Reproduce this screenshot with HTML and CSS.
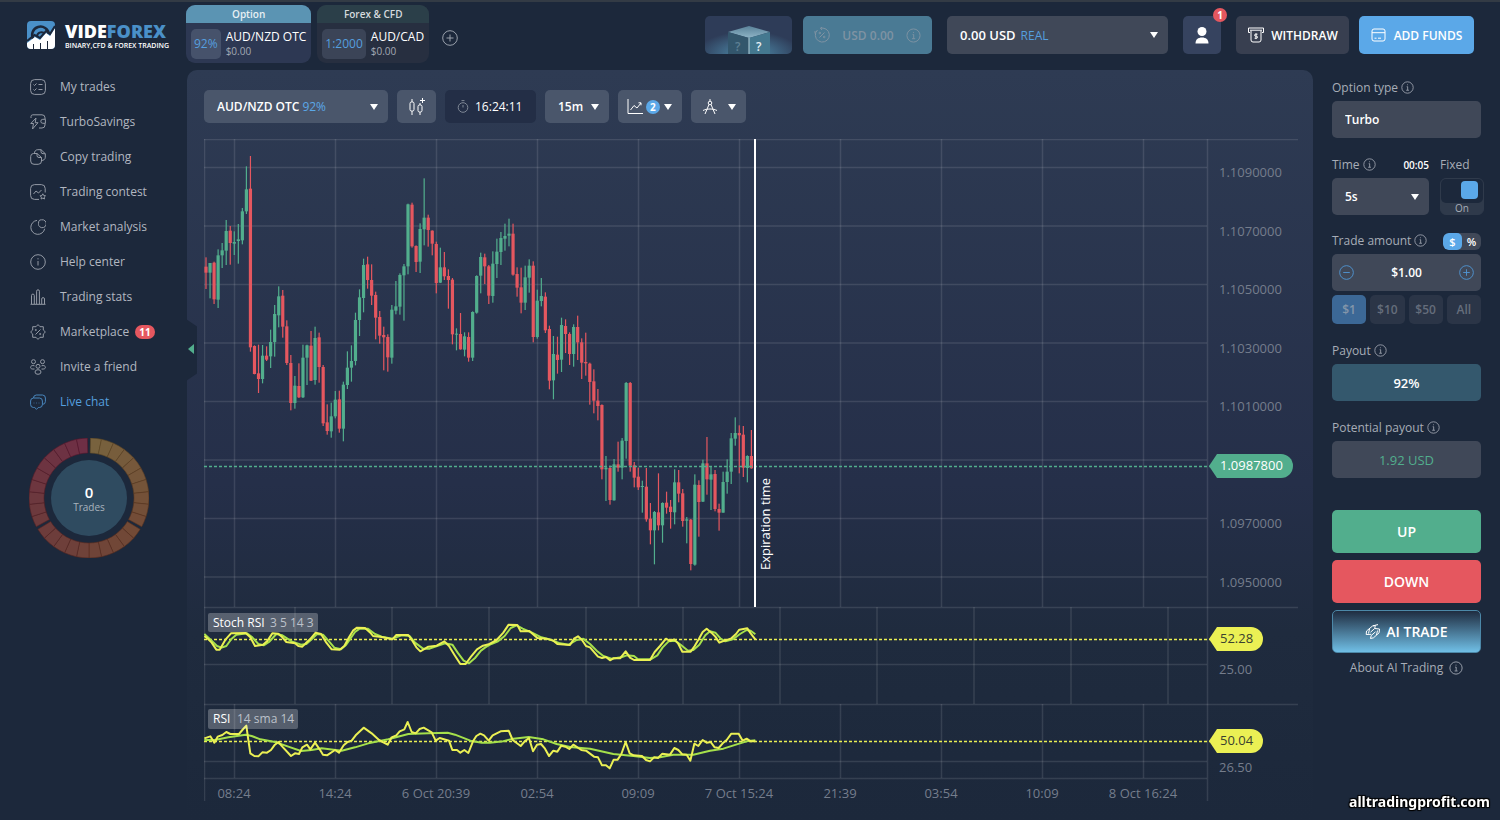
FILE: index.html
```html
<!DOCTYPE html>
<html lang="en">
<head>
  <meta charset="UTF-8" />
  <meta name="viewport" content="width=device-width, initial-scale=1.0"/>
  <title>VideForex</title>
  <link rel="stylesheet" href="styles.css">
</head>
<body>

<!-- shared icons -->
<svg class="sprite" aria-hidden="true">
  <symbol id="i-info" viewBox="0 0 16 16"><circle cx="8" cy="8" r="7"/><path d="M7 7h1.2v4.2M6.4 11.4h3.4M8 4.2v1"/></symbol>
  <symbol id="i-plus" viewBox="0 0 16 16"><circle cx="8" cy="8" r="7.3"/><path d="M8 4.5v7M4.5 8h7"/></symbol>
  <symbol id="i-minus" viewBox="0 0 16 16"><circle cx="8" cy="8" r="7.3"/><path d="M4.5 8h7"/></symbol>
</svg>

<header>
  <a href="#" class="logo">
    <svg width="28" height="28" viewBox="0 0 28 28">
      <rect width="28" height="28" rx="4" fill="#4a90c8"/>
      <path d="M6 18a8.500 8.500 0 1 1 16-5" fill="none" stroke="#1c283b" stroke-width="2.500"/>
      <path d="M10 15a4.500 4.500 0 0 1 8-2" fill="none" stroke="#1c283b" stroke-width="2"/>
      <path d="M0 22l8-6 5 3 6-7 4 3 5-8v17a4 4 0 0 1-4 4H4a4 4 0 0 1-4-4z" fill="#fff"/>
      <path d="M0 20l7.500-6 5.500 3 6-7 4 3 5-8" fill="none" stroke="#1c283b" stroke-width="2"/>
      <path d="M6.500 23v5M13.500 22v6M20.500 20v8" stroke="#1c283b" stroke-width="1"/>
    </svg>
    <span>
      <b class="brand">VIDE<i>FOREX</i></b>
      <span class="slogan">BINARY,CFD &amp; FOREX TRADING</span>
    </span>
  </a>

  <nav class="tabs">
    <a href="#" class="tab active">
      <span class="tab-title">Option</span>
      <span class="tab-body"><span class="rate">92%</span><span class="pair">AUD/NZD OTC<small>$0.00</small></span></span>
    </a>
    <a href="#" class="tab">
      <span class="tab-title">Forex &amp; CFD</span>
      <span class="tab-body"><span class="rate">1:2000</span><span class="pair">AUD/CAD<small>$0.00</small></span></span>
    </a>
    <button class="add-tab" aria-label="Add tab"><svg class="icon" width="16" height="16"><use href="#i-plus"/></svg></button>
  </nav>

  <div class="account">
    <button class="gift" aria-label="Mystery box">
      <svg width="87" height="38" viewBox="0 0 87 38">
        <defs>
          <radialGradient id="glow" cx=".5" cy="1" r=".6"><stop offset="0" stop-color="#4f8fab"/><stop offset=".5" stop-color="#3f6684"/><stop offset="1" stop-color="#2e3c58"/></radialGradient>
          <linearGradient id="lid" x1="0" y1="0" x2="0" y2="1"><stop offset="0" stop-color="#5a8299"/><stop offset="1" stop-color="#8fb4c6"/></linearGradient>
        </defs>
        <rect width="87" height="38" fill="url(#glow)"/>
        <path d="M23 16l21-6 21 6-21 6z" fill="url(#lid)"/>
        <path d="M23 16l21 6v16H23z" fill="#33566c"/>
        <path d="M65 16l-21 6v16h21z" fill="#44788f"/>
        <path d="M44 22v16" stroke="#b5d0dc"/>
        <text x="30" y="35" font-size="12" fill="#5d7f93">?</text>
        <text x="51" y="35" font-size="12" font-weight="600" fill="#e4eef3">?</text>
      </svg>
    </button>
    <button class="bonus">
      <svg class="icon" width="16" height="16" viewBox="0 0 16 16"><path d="M3.500 3A7 7 0 1 0 9 1.100H6.500M8 0L6.500 1.200 8 3M1 6.500V4M10.500 5.500l-5 5"/><circle cx="5.800" cy="6" r=".8"/><circle cx="10.200" cy="10" r=".8"/></svg>
      <span>USD 0.00</span>
      <svg class="icon" width="15" height="15"><use href="#i-info"/></svg>
    </button>
    <label class="balance caret">
      <span>0.00 USD</span>
      <select aria-label="Account"><option>REAL</option><option>DEMO</option></select>
    </label>
    <button class="profile" aria-label="Profile">
      <svg width="14" height="17" viewBox="0 0 14 17" fill="#fff"><circle cx="7" cy="4.500" r="4.500"/><path d="M.5 16.500c0-4 2.500-6 6.500-6s6.500 2 6.500 6z"/></svg>
      <span class="count">1</span>
    </button>
    <div class="funds">
      <button class="withdraw">
        <svg class="icon" width="18" height="16" viewBox="0 0 18 16"><path d="M3 5.500H1.500V1h15v4.500H15M3 3.200h12M4 3.500V13a2 2 0 0 0 2 2h6a2 2 0 0 0 2-2V3.500M10.500 7.200H8.600a1 1 0 0 0 0 2h.9a1 1 0 0 1 0 2H7.600M9 6.300v5.800"/></svg>
        WITHDRAW
      </button>
      <button class="add-funds">
        <svg class="icon" width="15" height="14" viewBox="0 0 15 14"><rect x="1" y="1" width="13" height="12" rx="2"/><path d="M1 4.700h13M3.500 10.200h2M7 10.200h3"/></svg>
        ADD FUNDS
      </button>
    </div>
  </div>
</header>

<div class="layout">
  <aside class="sidebar">
    <nav class="menu">
      <a href="#"><svg class="icon" viewBox="0 0 16 16"><rect x=".6" y=".6" width="14.800" height="14.800" rx="4"/><path d="M3.500 5.500l1 1 2-2M8.500 5.500h4M3.500 10.500l1 1 2-2M8.500 10.500h4"/></svg>My trades</a>
      <a href="#"><svg class="icon" viewBox="0 0 16 16"><path d="M1 4V2.500A1.800 1.800 0 0 1 2.800.8H12a3 3 0 0 1 3 3V5M15 9.500V11a3 3 0 0 1-3 3H9M15.400 5.300h-2.600a2 2 0 0 0 0 4h2.600zM6 4L.8 9.500h2.700L2.500 15 8 8.700H5.200z"/></svg>TurboSavings</a>
      <a href="#"><svg class="icon" viewBox="0 0 16 16"><path d="M3.500 4.500H7l4.500 4V12a3.300 3.300 0 0 1-3.300 3.300H4A3.300 3.300 0 0 1 .7 12V7.500a3 3 0 0 1 2.800-3zM7 4.500v2a2 2 0 0 0 2 2h2.500M4.500 4.500A3.300 3.300 0 0 1 7.800.7H11l4.300 4v3.500a3.300 3.300 0 0 1-3.800 3.200M11 .7v2a2 2 0 0 0 2 2h2.300"/></svg>Copy trading</a>
      <a href="#"><svg class="icon" viewBox="0 0 16 16"><path d="M9 15.400H4.500A3.900 3.900 0 0 1 .6 11.500v-7A3.900 3.900 0 0 1 4.500.6h6.800a3.900 3.900 0 0 1 3.900 3.900V8.500M3.500 10l2.500-3 2.500 2 3-3M12.800 9.800l.9 1.700 1.800.3-1.300 1.300.3 1.900-1.700-.8-1.700.8.3-1.900-1.300-1.300 1.800-.3z"/></svg>Trading contest</a>
      <a href="#"><svg class="icon" viewBox="0 0 16 16"><path d="M7 1.400a7 7 0 1 0 7.700 8.300M11.500.8a4 4 0 1 1-2 6.800c-1-1-1-1.500-1-3C8.500 2 9 .8 11.500.8z"/></svg>Market analysis</a>
      <a href="#"><svg class="icon" viewBox="0 0 16 16"><circle cx="8" cy="8" r="7.300"/><path d="M8 7v4.500M8 4.200v1.200"/></svg>Help center</a>
      <a href="#"><svg class="icon" viewBox="0 0 16 16"><path d="M.5 15.300h15M1.500 15V6.500a1.400 1.400 0 0 1 2.800 0V15M6.600 15V2.200a1.400 1.400 0 0 1 2.800 0V15M11.700 15v-5a1.400 1.400 0 0 1 2.800 0v5"/></svg>Trading stats</a>
      <a href="#"><svg class="icon" viewBox="0 0 16 16"><path d="M8 .6l2 2.100h3.300V6l2.100 2-2.100 2v3.300H10l-2 2.100-2-2.100H2.700V10L.6 8l2.100-2V2.700H6zM10.500 5.500l-5 5"/><circle cx="5.800" cy="6" r=".6"/><circle cx="10.200" cy="10" r=".6"/></svg>Marketplace<span class="count">11</span></a>
      <a href="#"><svg class="icon" viewBox="0 0 16 16"><circle cx="3.500" cy="2.700" r="2"/><circle cx="12.500" cy="2.700" r="2"/><circle cx="8" cy="7.300" r="2"/><ellipse cx="8" cy="13" rx="3" ry="2.300"/><path d="M4.500 6.800C2 6 .6 7 .6 8.400S2 10.300 4.500 10M11.500 6.800c2.500-.8 3.900.2 3.900 1.600s-1.400 1.900-3.900 1.600"/></svg>Invite a friend</a>
      <a href="#" class="live"><svg class="icon" viewBox="0 0 16 16"><path d="M3.500 4h6A3 3 0 0 1 12.400 7v3.500a3 3 0 0 1-2.900 3H8.300L6.500 15.300 4.700 13.500H3.500a3 3 0 0 1-2.900-3V7a3 3 0 0 1 2.900-3zM3.500 4A3 3 0 0 1 6.200 1h6.300a3 3 0 0 1 2.900 3v3.500a3 3 0 0 1-3 2.900M3.700 9h.6M6.200 9h.6M8.700 9h.6"/></svg>Live chat</a>
    </nav>
    <div class="trades">
      <svg id="ring" viewBox="0 0 120 120"></svg>
      <div class="trades-count"><b>0</b>Trades</div>
    </div>
  </aside>

  <main>
    <button class="collapse" aria-label="Hide menu"></button>
    <div class="toolbar">
      <button class="asset caret">AUD/NZD OTC <span>92%</span></button>
      <button class="tool square" aria-label="Chart type">
        <svg class="icon" width="18" height="18" viewBox="0 0 18 18"><rect x="2" y="4" width="4" height="9" rx="1.500"/><rect x="10" y="7" width="4" height="7" rx="1.500"/><path d="M4 1v3M4 13v4M12 5v2M12 14v3M14.500 0v5M12 2.500h5"/></svg>
      </button>
      <div class="clock">
        <svg class="icon" width="12" height="13" viewBox="0 0 12 13"><circle cx="6" cy="7.500" r="4.800"/><path d="M6 5v2.500M4.500.6h3"/></svg>
        16:24:11
      </div>
      <label class="tool interval caret"><select aria-label="Interval"><option>15m</option><option>1h</option></select></label>
      <button class="tool caret" aria-label="Indicators">
        <svg class="icon" width="16" height="16" viewBox="0 0 16 16"><path d="M1 0v14.500h15M3.500 11l3.500-4.500 3 2.500 4-5M11.500 3.800H14v2.500"/></svg>
        <span class="count blue">2</span>
      </button>
      <button class="tool drawing caret" aria-label="Drawing tools">
        <svg class="icon" width="16" height="16" viewBox="0 0 16 16"><circle cx="8" cy="4" r="1.800"/><path d="M8 0v2M7 5.500L3 15M9 5.500L13 15M1 11.500c4-2 10-2 14 0"/></svg>
      </button>
    </div>
    <svg id="chart" viewBox="0 0 1094 664" role="img" aria-label="AUD/NZD OTC price chart"></svg>
  </main>

  <form class="order">
    <label for="type" class="caption">Option type <svg class="icon" width="13" height="13"><use href="#i-info"/></svg></label>
    <select id="type" class="box"><option>Turbo</option></select>

    <div class="time-row">
      <div class="time">
        <label for="time" class="caption">Time <svg class="icon" width="13" height="13"><use href="#i-info"/></svg><b>00:05</b></label>
        <div class="caret"><select id="time" class="box"><option>5s</option><option>10s</option></select></div>
      </div>
      <div class="fixed">
        <label for="fixed" class="caption">Fixed</label>
        <div class="switch"><input type="checkbox" id="fixed" checked><span>On</span></div>
      </div>
    </div>

    <div class="amount-row">
      <label for="amount" class="caption">Trade amount <svg class="icon" width="13" height="13"><use href="#i-info"/></svg></label>
      <div class="unit">
        <label><input type="radio" name="unit" checked><span>$</span></label>
        <label><input type="radio" name="unit"><span>%</span></label>
      </div>
    </div>
    <div class="box stepper">
      <button type="button" aria-label="Less"><svg class="icon" width="15" height="15"><use href="#i-minus"/></svg></button>
      <input type="text" id="amount" value="$1.00">
      <button type="button" aria-label="More"><svg class="icon" width="15" height="15"><use href="#i-plus"/></svg></button>
    </div>
    <div class="quick">
      <button type="button" class="active">$1</button>
      <button type="button">$10</button>
      <button type="button">$50</button>
      <button type="button">All</button>
    </div>

    <div class="caption">Payout <svg class="icon" width="13" height="13"><use href="#i-info"/></svg></div>
    <output class="box payout">92%</output>

    <div class="caption">Potential payout <svg class="icon" width="13" height="13"><use href="#i-info"/></svg></div>
    <output class="box potential">1.92 USD</output>

    <div class="actions">
      <button type="button" class="up">UP</button>
      <button type="button" class="down">DOWN</button>
      <button type="button" class="ai">
        <svg class="icon" width="16" height="16" viewBox="0 0 16 16"><path d="M1.200 10.500L1.500 7l6-5 2.800-.5-.6 3L5.500 8.200M9.800 4.500L14.500 5l-.4 3.800-5.600 5-3 .7.700-3 4.300-3.700M4.500 5l-1 4.500M11.500 11l1-4.500M1.200 10.500l5-.2M8 1.800l5-1.200"/></svg>
        AI TRADE
      </button>
    </div>
    <a href="#" class="about">About AI Trading <svg class="icon" width="14" height="14"><use href="#i-info"/></svg></a>
  </form>
</div>

<div class="site">alltradingprofit.com</div>

<script src="chart.js"></script>
</body>
</html>
```
FILE: styles.css
```css
* {
  box-sizing: border-box;
}

body {
  margin: 0;
  min-height: 100vh;
  background: #1c283b;
  color: #fff;
  font-family: "Open Sans", "Noto Sans", sans-serif;
  font-size: 12px;
  border-top: 2px solid #333b45;
}

button, select, input {
  font: inherit;
  color: inherit;
  border: none;
  border-radius: 5px;
  background: none;
  padding: 0;
  margin: 0;
}

select {
  appearance: none;
  width: 100%;
}

a {
  color: inherit;
  text-decoration: none;
}

.sprite {
  position: absolute;
  width: 0;
  height: 0;
}

.icon {
  fill: none;
  stroke: currentColor;
  stroke-width: 1;
  flex: none;
}

.caret {
  position: relative;
}

.caret::after {
  content: "";
  position: absolute;
  right: 10px;
  top: 50%;
  margin-top: -3px;
  border: 4px solid transparent;
  border-top: 6px solid #fff;
  border-bottom: none;
  pointer-events: none;
}

.count {
  background: #e5575f;
  color: #fff;
  font-size: 10px;
  font-weight: 700;
  line-height: 14px;
  padding: 0 4px;
  border-radius: 7px;
}

.count.blue {
  background: #5ba8e8;
}

/* header */

header {
  display: flex;
  align-items: flex-start;
  height: 68px;
  padding-right: 26px;
}

.logo {
  display: flex;
  align-items: flex-start;
  gap: 10px;
  width: 186px;
  padding: 19px 0 0 27px;
  white-space: nowrap;
}

.logo > span {
  display: flex;
  flex-direction: column;
}

.brand {
  font-size: 18px;
  line-height: 20px;
  font-weight: 800;
}

.brand i {
  font-style: normal;
  color: #4a90c8;
}

.slogan {
  font-size: 7px;
  line-height: 9px;
  font-weight: 600;
}

.tabs {
  display: flex;
  gap: 6px;
  padding-top: 3px;
}

.tab {
  background: #272f40;
  border-radius: 9px;
  overflow: hidden;
  height: 58px;
}

.tab.active {
  background: #2d3853;
}

.tab-title {
  display: block;
  background: #2b3f49;
  color: #d5dade;
  font-size: 10px;
  font-weight: 600;
  line-height: 18px;
  text-align: center;
}

.active .tab-title {
  background: #5b94b3;
  color: #e8f0f4;
}

.tab-body {
  display: flex;
  gap: 5px;
  padding: 6px 5px;
}

.rate {
  background: #3b4457;
  color: #559fdf;
  font-weight: 500;
  line-height: 29px;
  padding: 0 3px;
  border-radius: 5px;
}

.active .rate {
  background: #46526b;
}

.pair {
  font-weight: 500;
  line-height: 15px;
}

.pair small {
  display: block;
  color: #a3a9b4;
  font-size: 10px;
  font-weight: 400;
}

.add-tab {
  align-self: center;
  height: 16px;
  margin: 8px 0 0 7px;
  color: #9aa1ac;
}

.account {
  display: flex;
  gap: 15px;
  margin-left: auto;
  padding-top: 14px;
}

.account button,
.balance {
  height: 38px;
  display: flex;
  align-items: center;
  justify-content: center;
  font-weight: 600;
}

.account .gift {
  width: 87px;
  overflow: hidden;
  margin-right: -4px;
}

.account .bonus {
  width: 129px;
  gap: 12px;
  background: #4a7a94;
  color: #7f93a3;
}

.balance {
  width: 221px;
  padding-left: 13px;
  gap: 5px;
  background: #404858;
  border-radius: 5px;
  white-space: nowrap;
  font-size: 13px;
}

.balance select {
  color: #559fdf;
  font-weight: 500;
  font-size: 12px;
}

.account .profile {
  position: relative;
  width: 38px;
  background: #36435f;
}

.profile .count {
  position: absolute;
  top: -8px;
  right: -6px;
}

.funds {
  display: flex;
  gap: 10px;
}

.account .withdraw {
  width: 113px;
  gap: 6px;
  background: #383f50;
}

.account .add-funds {
  width: 115px;
  gap: 8px;
  background: #5ba8e8;
}

/* columns */

.layout {
  display: grid;
  grid-template-columns: 187px 1fr 187px;
}

.menu {
  display: flex;
  flex-direction: column;
  margin-top: -1px;
  color: #b2b7c0;
  font-weight: 500;
}

.menu a {
  display: flex;
  align-items: center;
  height: 35px;
  padding-left: 30px;
}

.menu .icon {
  width: 16px;
  height: 16px;
  margin-right: 14px;
  opacity: 0.8;
}

.menu .count {
  margin-left: 6px;
}

.menu .live {
  color: #559fdf;
}

.trades {
  display: grid;
  width: 120px;
  margin: 19px 0 0 29px;
}

.trades > * {
  grid-area: 1 / 1;
}

.trades-count {
  place-self: center;
  color: #a9b3bd;
  font-size: 10px;
  line-height: 12px;
  text-align: center;
}

.trades-count b {
  display: block;
  color: #fff;
  font-size: 15px;
  font-weight: 600;
  line-height: 18px;
}

main {
  position: relative;
  min-width: 0;
  padding: 20px 15px 17px 17px;
  border-radius: 10px 10px 0 0;
  background: linear-gradient(#2e3b53, #252f49 55%, #1f2b3e 75%, #1c283b);
}

.collapse {
  position: absolute;
  left: -1px;
  top: 249px;
  width: 11px;
  height: 62px;
  border-radius: 0;
  background: #1c283b;
  clip-path: polygon(0 0, 100% 12%, 100% 88%, 0 100%);
}

.collapse::after {
  content: "";
  position: absolute;
  left: 2px;
  top: 25px;
  border: 5px solid transparent;
  border-right: 6px solid #52ae8d;
  border-left: none;
}

.toolbar {
  display: flex;
  gap: 9px;
  margin-bottom: 16px;
}

.toolbar > * {
  display: flex;
  align-items: center;
  height: 33px;
  padding-left: 9px;
  border-radius: 5px;
  background: #4a566b;
}

.toolbar .asset {
  width: 184px;
  gap: 3px;
  padding-left: 13px;
  font-weight: 600;
}

.asset span {
  color: #5ba8e8;
  font-weight: 400;
}

.tool {
  width: 64px;
}

.toolbar .square {
  width: 39px;
  padding-left: 11px;
}

.toolbar .clock {
  width: 91px;
  gap: 6px;
  padding-left: 12px;
  background: #232e46;
}

.clock .icon {
  color: #7f8896;
}

.interval select {
  padding-left: 4px;
  font-weight: 600;
}

.tool .count {
  margin-left: 3px;
}

.toolbar .drawing {
  width: 55px;
  padding-left: 11px;
}

#chart {
  display: block;
  width: 100%;
  height: auto;
}

#chart text {
  font-size: 13px;
  fill: #757d8c;
}

#chart .grid {
  stroke: #fff;
  stroke-opacity: 0.11;
  stroke-width: 1.5;
}

#chart .dash {
  fill: none;
  stroke-width: 1.3;
  stroke-dasharray: 3 2;
}

#chart .curve {
  fill: none;
  stroke-width: 2;
  stroke-linejoin: round;
}

#chart .white {
  fill: #fff;
}

#chart .dark {
  fill: #3a4130;
}

#chart .legend {
  font-size: 12px;
  fill: #bcc1ca;
}

#chart .legend tspan {
  fill: #fff;
}

/* order form */

.order {
  display: flex;
  flex-direction: column;
  padding: 6px 19px 0;
}

.caption {
  display: flex;
  align-items: center;
  gap: 3px;
  height: 23px;
  margin-bottom: 2px;
  color: #a7adb7;
}

.caption b {
  margin-left: auto;
  color: #fff;
  font-size: 10px;
  font-weight: 600;
}

.box {
  display: flex;
  align-items: center;
  justify-content: center;
  height: 37px;
  padding: 0 13px;
  margin-bottom: 15px;
  border-radius: 5px;
  background: #404858;
  font-weight: 600;
}

.time-row {
  display: flex;
  gap: 11px;
  height: 76px;
  margin-right: -3px;
}

.time {
  flex: 1;
}

.time .box {
  margin: 0;
}

.switch {
  display: flex;
  flex-direction: column;
  width: 44px;
  border: 1px solid #2f3a4b;
  border-radius: 6px;
  background: #2f3a4b;
  color: #a7adb7;
  font-size: 10px;
  line-height: 11px;
  text-align: center;
}

.switch input {
  appearance: none;
  height: 24px;
  background: #1c283b;
}

.switch input::before {
  content: "";
  display: block;
  width: 17px;
  height: 18px;
  margin: 2px 0 0 20px;
  border-radius: 4px;
  background: #5ba8e8;
}

.amount-row {
  display: flex;
  justify-content: space-between;
  align-items: center;
}

.unit {
  display: flex;
  border-radius: 6px;
  overflow: hidden;
  background: #404858;
  font-weight: 600;
  font-size: 11px;
  line-height: 17px;
  text-align: center;
}

.unit input {
  position: absolute;
  opacity: 0;
}

.unit span {
  display: block;
  width: 19px;
}

.unit input:checked + span {
  background: #5ba8e8;
  border-radius: 5px;
}

.stepper {
  margin-bottom: 4px;
  padding: 0 7px;
}

.stepper button {
  height: 15px;
  color: #4f93d0;
}

.stepper input {
  flex: 1;
  min-width: 0;
  text-align: center;
}

.quick {
  display: grid;
  grid-template-columns: repeat(4, 1fr);
  gap: 4px;
  margin-bottom: 15px;
}

.quick button {
  height: 29px;
  background: #2b3547;
  color: #656d7b;
  font-weight: 600;
}

.quick .active {
  background: #3c6896;
  color: #8496aa;
}

.payout {
  background: #34586d;
  font-size: 13px;
}

.potential {
  color: #52ae8d;
  font-size: 13px;
  font-weight: 500;
  margin-bottom: 32px;
}

.actions {
  display: grid;
  gap: 7px;
}

.actions button {
  height: 43px;
  font-size: 14px;
  font-weight: 600;
}

.actions .up {
  background: #52ae8d;
}

.actions .down {
  background: #e5575f;
}

.actions .ai {
  display: flex;
  align-items: center;
  justify-content: center;
  gap: 5px;
  border: 1px solid #4c88a8;
  background: linear-gradient(#1f2c40, #70bfe6);
}

.about {
  display: flex;
  align-items: center;
  justify-content: center;
  gap: 6px;
  margin-top: 6px;
  color: #a7adb7;
}

.site {
  position: fixed;
  right: 10px;
  bottom: 9px;
  font-family: "Noto Sans", sans-serif;
  font-size: 14px;
  font-weight: 700;
  line-height: 18px;
  text-shadow: 1px 1px 1px #000, -1px -1px 1px #000, 1px -1px 1px #000, -1px 1px 1px #000;
}
```
FILE: chart.js
```js
const GREEN = '#52ae8d';
const RED = '#e5575f';
const YELLOW = '#ebf054';
const LIME = '#a5e04b';

// one bar: direction, high, body top, body bottom, low (thirds of a pixel)
const morning = `R 367 395 413 462,G 384 384 413 490,R 380 383 493 507,G 343 361 494 519,G 324 346 361 399,
G 255 288 347 390,R 273 287 324 389,G 289 321 326 360,G 267 313 318 386,G 219 229 316 328,G 94 163 229 237,
R 63 161 637 650,R 631 633 717 718,R 629 715 732 774,G 630 662 732 745,R 634 662 674 678,G 584 621 664 699,
G 510 537 621 665,G 454 484 541 577,R 465 482 575 608,R 556 574 684 690,R 660 684 804 826,G 723 752 804 821,
R 685 753 787 789,G 629 668 787 789,G 629 631 668 750,R 588 632 737 738,G 575 609 735 749,R 593 607 696 743,
R 690 696 865 873,R 808 862 888 899,G 803 844 889 908,G 768 794 844 850,R 767 793 881 893,G 740 749 881 919,
G 649 698 750 762,G 631 678 698 740,G 533 555 678 691,G 463 487 555 603,G 371 390 489 532,R 365 388 435 461,
R 388 435 482 510,R 470 480 548 613,R 528 546 602 626,R 575 600 607 706,R 598 606 667 710,G 510 524 668 686,
G 438 514 527 538,G 415 420 515 539,G 387 394 421 557,G 206 208 394 418,R 203 209 334 338,R 331 333 381 411,
G 265 282 380 414,G 130 248 283 331,R 239 248 285 335,R 286 287 326 361,R 320 327 444 475,G 338 397 443 444,
R 351 397 424 435,R 403 423 435 521,R 429 434 598 628,G 580 596 599 646,R 534 597 643 644,G 592 604 644 664,
R 592 606 668 680,G 529 531 668 678,G 421 423 533 536,G 353 366 422 475,R 356 367 394 447,R 390 394 482 507`;

const evening = `G 154 191 288 308,G 116 155 192 234,G 96 114 156 195,G 71 108 116 152,G 56 101 107 139,
R 71 101 224 227,R 202 222 263 290,R 203 262 308 340,G 197 232 308 330,G 178 197 233 278,R 184 197 411 427,
G 269 302 411 416,G 234 288 303 319,R 277 290 391 399,R 377 387 542 568,G 408 462 541 598,R 410 464 480 521,
G 353 375 479 516,R 358 378 402 459,R 397 402 462 495,G 373 381 462 500,R 347 381 427 480,R 415 427 488 537,
R 398 486 490 527,R 488 491 546 614,R 508 544 602 640,R 567 602 618 661,R 613 615 808 838,G 768 803 808 903,
R 797 804 900 914,G 777 793 901 902,R 725 793 803 815,G 714 722 803 838,G 546 549 723 776,R 546 549 797 815,
R 786 796 833 862,R 803 830 862 870,G 842 858 861 938,R 804 860 958 965,R 909 956 991 1033,G 933 936 991 1093,
R 820 937 976 991,G 907 909 976 1028,R 875 908 923 941,R 900 920 936 986,G 808 847 937 973,R 810 847 881 907,
R 867 880 963 980,G 951 958 962 1030,R 957 959 1092 1111,G 823 854 1094 1097,R 841 855 906 1010,G 779 790 905 906,
R 711 790 838 884,G 798 823 839 930,R 810 822 927 934,R 911 927 938 992,G 815 846 938 938,G 778 815 846 881,
G 699 715 815 852,G 652 699 716 737,R 676 699 706 820,R 678 704 803 831,G 766 768 804 847,R 690 768 805 806`;

const stochK = [
  '28,108 40,118 50,128 64,149 74,149 92,118 108,100 152,99 166,112 180,138 204,134 216,124 232,100 250,101 262,112 274,126 300,130 310,138 322,140 332,130 345,118 362,98 378,102 394,128 410,148 434,149 448,138 462,112 474,92 486,83 510,84 526,98 534,108 560,111 592,118 604,105 640,105 652,122 664,142 676,154 700,140 725,137 748,124 762,138 778,164 796,192 812,192 828,170 846,148 864,137',
  '26,133 50,120 70,98 86,74 112,75 122,94 148,93 172,114 200,116 220,122 232,132 270,135 282,116 294,109 306,120 318,138 330,142 354,170 366,174 378,171 390,181 400,175 420,175 437,154 450,173 462,180 510,180 524,156 540,138 558,116 570,123 582,118 594,130 607,155 632,155 644,138 656,118 668,96 680,86 694,98 706,110 718,128 734,122 754,115 768,102 778,89 802,85 812,100 826,118'
];
const stochD = [
  '28,102 50,122 66,138 80,143 94,138 110,116 124,104 156,100 172,112 190,132 206,136 222,126 244,102 262,106 290,124 318,134 334,132 350,118 366,102 384,104 400,122 418,143 438,148 452,136 466,116 480,96 494,86 518,86 540,102 560,110 592,116 620,106 644,108 660,128 684,146 704,146 726,138 750,130 772,134 788,158 806,182 822,190 840,174 858,152',
  '16,142 34,132 54,124 74,108 92,84 110,76 128,86 156,98 184,112 214,120 240,130 266,134 290,120 310,116 330,132 350,152 370,168 394,176 424,172 440,166 462,168 474,178 512,178 532,166 548,142 566,124 586,122 604,136 624,152 640,150 658,134 676,106 690,94 706,98 722,116 736,124 758,118 780,102 800,90 812,92 826,103'
];
const rsi = [
  '28,415 46,409 58,428 68,410 82,405 94,396 106,402 132,402 142,390 154,377 160,420 166,460 178,468 190,469 202,457 216,458 228,450 238,436 250,426 262,440 288,468 300,460 312,462 322,442 336,434 346,448 360,428 374,448 384,464 396,466 420,450 432,458 446,436 458,426 470,422 482,406 506,383 530,400 552,420 578,434 590,412 604,406 614,394 628,388 638,366 650,396 662,400 674,387 686,383 710,397 722,422 734,414 762,422 772,450 786,450 796,458 808,450 820,459 834,424 844,408 856,401',
  '12,406 26,422 38,406 62,394 86,392 98,420 122,438 134,424 147,414 159,454 171,434 183,432 195,446 207,468 220,452 232,455 244,437 256,440 268,447 280,434 304,450 318,452 342,470 354,472 366,496 378,496 389,505 401,479 413,479 424,462 437,426 449,460 461,466 486,468 498,480 510,484 522,472 534,474 547,461 570,464 583,444 595,450 607,463 620,464 631,482 643,431 655,438 668,420 680,428 692,426 704,442 716,444 728,430 740,420 754,401 776,401 788,422 800,416 812,424 826,424'
];
const sma = [
  '28,420 60,420 100,412 152,404 170,408 196,418 240,426 280,440 318,453 350,450 380,445 440,452 480,442 520,430 580,418 640,402 700,400 758,398 780,404 826,422 860,428',
  '30,428 70,424 100,416 146,411 190,418 230,432 270,441 330,446 400,462 460,468 510,474 540,472 580,464 640,464 690,452 730,446 780,430 800,424 826,421'
];

function line(x1, y1, x2, y2) {
  return `<path class="grid" d="M${x1} ${y1}L${x2} ${y2}"/>`;
}

function candles(text, start, shift) {
  return text.split(',').map((bar, i) => {
    const [dir, ...v] = bar.trim().split(' ');
    const [high, top, bottom, low] = v.map(n => (Number(n) + shift) / 3 - 4);
    const x = 2 + (start + i) * 4.04;
    const color = dir === 'G' ? GREEN : RED;
    return `<g fill="${color}"><rect x="${x - 0.6}" y="${high}" width="1.2" height="${low - high}"/>` +
      `<rect x="${x - 1.6}" y="${top}" width="3.2" height="${Math.max(bottom - top, 1)}"/></g>`;
  }).join('');
}

function curve(parts, color) {
  const points = parts.map((part, n) => part.split(' ').map(p => {
    const [x, y] = p.split(',').map(Number);
    return (x + n * 855) / 3 - 9 + ',' + (y / 3 + 461);
  }).join(' ')).join(' ');
  return `<polyline class="curve" stroke="${color}" points="${points}"/>`;
}

function tag(y, width, label, color, cls) {
  return `<path fill="${color}" d="M1005 ${y}l8-12h${width - 20}a12 12 0 0 1 0 24h-${width - 20}z"/>` +
    `<text class="${cls}" x="1016" y="${y + 4}">${label}</text>`;
}

let out = '';

for (let i = 0; i < 10; i++) {
  const x = 30.5 + i * 101;
  out += line(x, 0, x, 468) + line(x, 565, x, 639);
  out += line(91 + i * 97, 468, 91 + i * 97, 565);
}
for (let i = 0; i < 8; i++) {
  out += line(0, 28.5 + i * 58.5, 1003, 28.5 + i * 58.5);
}
[0.5, 468.5, 565.5].forEach(y => out += line(0, y, 1094, y));
[525.5, 622.5, 639.5].forEach(y => out += line(0, y, 1003, y));
out += line(0.5, 0, 0.5, 662) + line(1003.5, 0, 1003.5, 662);

out += candles(morning, 0, 0) + candles(evening, 71, 195);
out += `<path class="dash" stroke="${GREEN}" d="M0 327.500H1006"/>`;
out += `<path class="dash" stroke="${YELLOW}" d="M0 500.500H1006M0 602.500H1006"/>`;
out += curve(stochD, LIME) + curve(stochK, YELLOW) + curve(sma, LIME) + curve(rsi, YELLOW);

out += '<rect x="550" y="0" width="2" height="468" fill="#fff"/>';
out += '<text class="white" transform="translate(566 431) rotate(-90)">Expiration time</text>';

['1.1090000', '1.1070000', '1.1050000', '1.1030000', '1.1010000', '', '1.0970000', '1.0950000'].forEach((p, i) => {
  out += `<text x="1015" y="${38 + i * 58.5}">${p}</text>`;
});
out += '<text x="1015" y="535">25.00</text><text x="1015" y="633">26.50</text>';

['08:24', '14:24', '6 Oct 20:39', '02:54', '09:09', '7 Oct 15:24', '21:39', '03:54', '10:09', '8 Oct 16:24'].forEach((t, i) => {
  out += `<text x="${30 + i * 101}" y="659" text-anchor="middle">${t}</text>`;
});

out += tag(327, 84, '1.0987800', GREEN, 'white') + tag(500, 54, '52.28', YELLOW, 'dark') + tag(602, 54, '50.04', YELLOW, 'dark');

out += '<rect x="4" y="474" width="110" height="19" rx="2" fill="#fff" fill-opacity=".25"/>';
out += '<text class="legend" x="9" y="488"><tspan>Stoch RSI</tspan></text><text class="legend" x="66" y="488">3 5 14 3</text>';
out += '<rect x="4" y="570" width="90" height="20" rx="2" fill="#fff" fill-opacity=".25"/>';
out += '<text class="legend" x="9" y="584"><tspan>RSI</tspan></text><text class="legend" x="33" y="584">14 sma 14</text>';

document.getElementById('chart').innerHTML = out;

// trades ring: three arcs of ten cells, yellow to crimson
const stops = [[120, 98, 62], [114, 74, 54], [108, 58, 60], [110, 46, 70]];
let ring = '<circle cx="60" cy="60" r="38" fill="#2f4b60"/>';
for (let i = 0; i < 30; i++) {
  const t = i / 10;
  const k = Math.floor(t);
  const rgb = stops[k].map((c, n) => Math.round(c + (stops[k + 1][n] - c) * (t - k)));
  const from = (i * 12 + (i % 10 === 0 ? 1.5 : 0)) * Math.PI / 180;
  const to = (i * 12 + (i % 10 === 9 ? 10.5 : 12)) * Math.PI / 180;
  const at = (a, r) => `${60 + r * Math.sin(a)} ${60 - r * Math.cos(a)}`;
  ring += `<path fill="rgb(${rgb})" stroke="rgb(${rgb.map(c => c - 25)})" stroke-width=".6" ` +
    `d="M${at(from, 60)}A60 60 0 0 1 ${at(to, 60)}L${at(to, 45)}A45 45 0 0 0 ${at(from, 45)}z"/>`;
}
document.getElementById('ring').innerHTML = ring;
```
